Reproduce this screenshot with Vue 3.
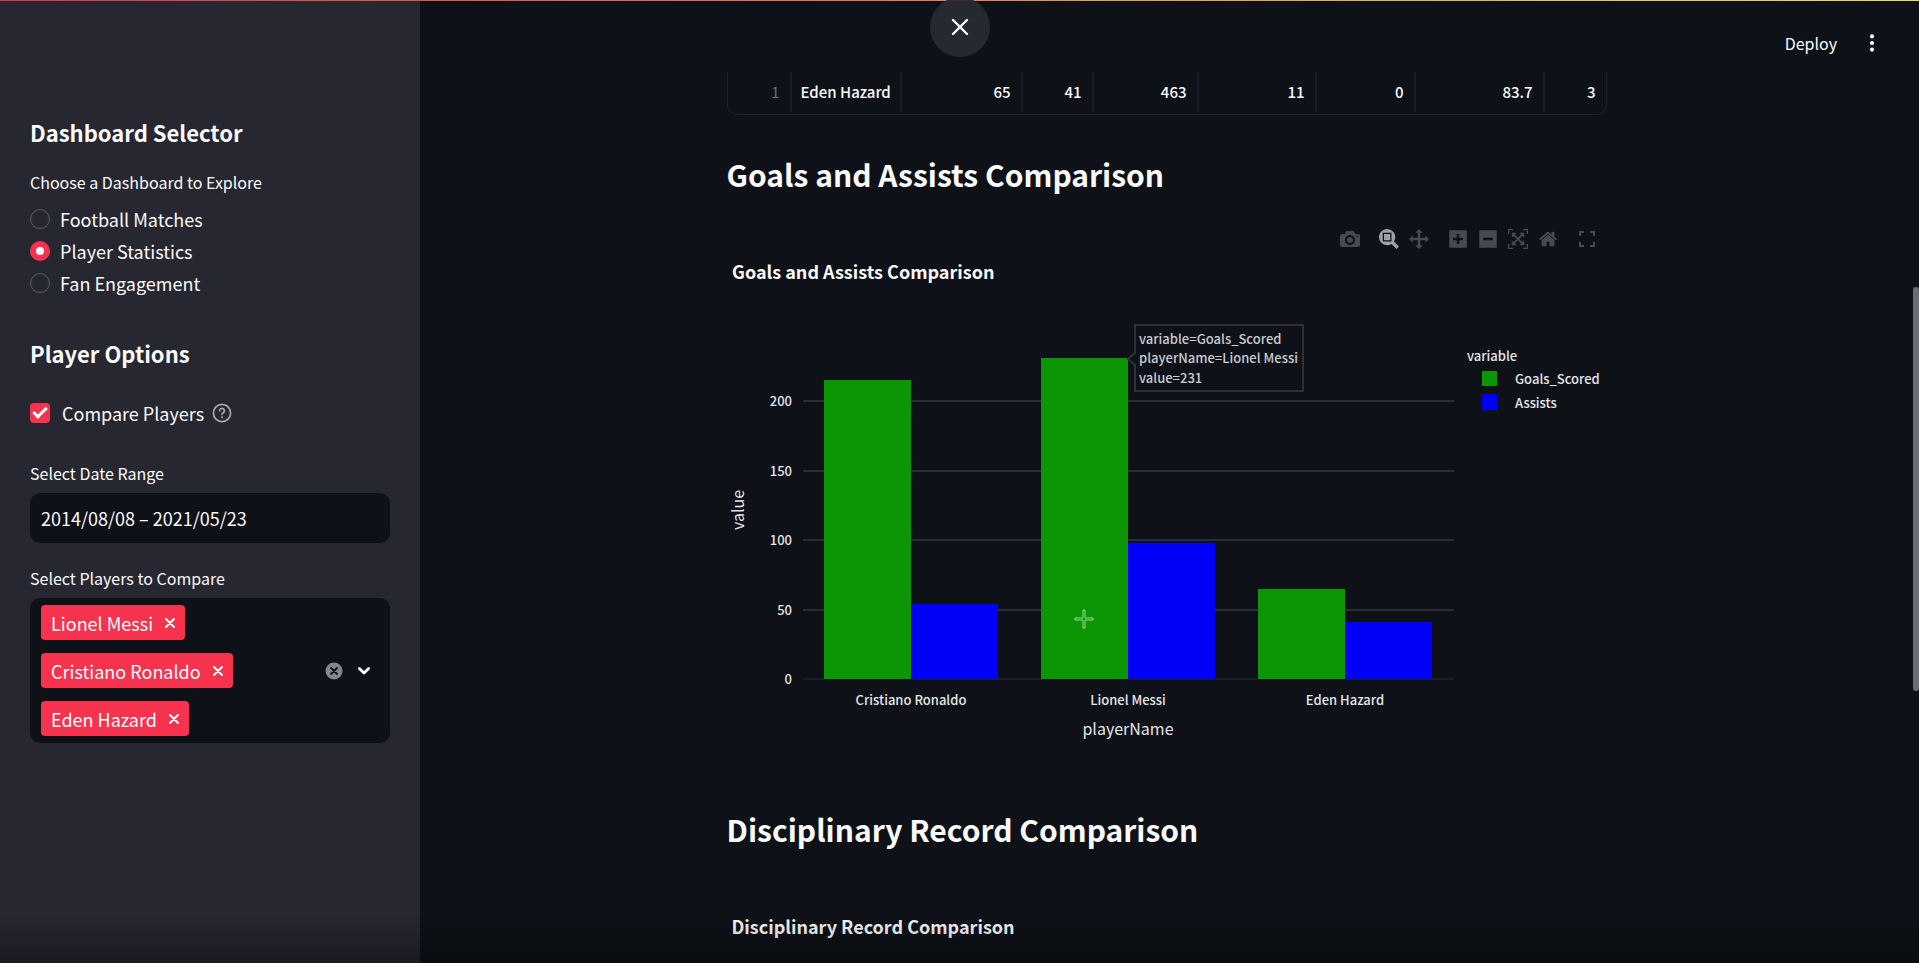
<script setup>
import { ref } from 'vue'

const dashboards = ['Football Matches', 'Player Statistics', 'Fan Engagement']
const dashboard = ref('Player Statistics')
const compare = ref(true)
const dateRange = ref('2014/08/08 – 2021/05/23')
const players = ref(['Lionel Messi', 'Cristiano Ronaldo', 'Eden Hazard'])
const row = ['65', '41', '463', '11', '0', '83.7', '3']

const removePlayer = (name) => {
  players.value = players.value.filter((p) => p !== name)
}

const stats = [
  { name: 'Cristiano Ronaldo', goals: 215, assists: 54 },
  { name: 'Lionel Messi', goals: 231, assists: 98 },
  { name: 'Eden Hazard', goals: 65, assists: 41 }
]
const plot = { left: 76, right: 727, zero: 429, step: 217, bar: 87 }
const yOf = (v) => Math.round(plot.zero - (v * 278) / 200)
const centre = (i) => plot.left + 108 + i * plot.step
const ticks = [0, 50, 100, 150, 200]

const tools = [
  { label: 'Download plot as a png', w: 1000, d: 'm500 450c-83 0-150-67-150-150 0-83 67-150 150-150 83 0 150 67 150 150 0 83-67 150-150 150z m400 150h-120c-16 0-34 13-39 29l-31 93c-6 15-23 28-40 28h-340c-16 0-34-13-39-28l-31-94c-6-15-23-28-40-28h-120c-55 0-100-45-100-100v-450c0-55 45-100 100-100h800c55 0 100 45 100 100v450c0 55-45 100-100 100z m-400-550c-138 0-250 112-250 250 0 138 112 250 250 250 138 0 250-112 250-250 0-138-112-250-250-250z m365 380c-19 0-35 16-35 35 0 19 16 35 35 35 19 0 35-16 35-35 0-19-16-35-35-35z' },
  { label: 'Zoom', w: 1000, start: true, active: true, d: 'm1000-25l-250 251c40 63 63 138 63 218 0 224-182 406-407 406-224 0-406-182-406-406s183-406 407-406c80 0 155 22 218 62l250-250 125 125z m-812 250l0 438 437 0 0-438-437 0z m62 375l313 0 0-312-313 0 0 312z' },
  { label: 'Pan', w: 1000, d: 'm1000 350l-187 188 0-125-250 0 0 250 125 0-188 187-187-187 125 0 0-250-250 0 0 125-188-188 186-187 0 125 252 0 0-250-125 0 187-188 188 188-125 0 0 250 250 0 0-126 187 188z' },
  { label: 'Zoom in', w: 875, start: true, d: 'm1 787l0-875 875 0 0 875-875 0z m687-500l-187 0 0-187-125 0 0 187-188 0 0 125 188 0 0 187 125 0 0-187 187 0 0-125z' },
  { label: 'Zoom out', w: 875, d: 'm0 788l0-876 875 0 0 876-875 0z m688-500l-500 0 0 125 500 0 0-125z' },
  { label: 'Autoscale', w: 1000, d: 'm250 850l-187 0-63 0 0-62 0-188 63 0 0 188 187 0 0 62z m688 0l-188 0 0-62 188 0 0-188 62 0 0 188 0 62-62 0z m-875-938l0 188-63 0 0-188 0-62 63 0 187 0 0 62-187 0z m875 188l0-188-188 0 0-62 188 0 62 0 0 62 0 188-62 0z m-125 188l-1 0-93-94-156 156 156 156 92-93 2 0 0 250-250 0 0-2 93-92-156-156-156 156 94 92 0 2-250 0 0-250 0 0 93 93 157-156-157-156-93 94 0 0 0-250 250 0 0 0-94 93 156 157 156-157-93-93 0 0 250 0 0 250z' },
  { label: 'Reset axes', w: 928, d: 'm786 296v-267q0-15-11-26t-25-10h-214v214h-143v-214h-214q-15 0-25 10t-11 26v267q0 1 0 2t0 2l321 264 321-264q1-1 1-4z m124 39l-34-41q-5-5-12-6h-2q-7 0-12 3l-386 322-386-322q-7-4-13-4-7 2-12 7l-35 41q-4 5-3 13t6 12l401 334q18 15 42 15t43-15l136-114v109q0 8 5 13t13 5h107q8 0 13-5t5-13v-227l122-102q5-5 6-12t-4-13z' }
]
</script>

<template>
  <div class="app">
    <div class="rainbow"></div>
    <button class="close" aria-label="Close">
      <svg width="18" height="18" viewBox="0 0 18 18"><path d="M2 2L16 16M16 2L2 16" stroke="#fff" stroke-width="2.4" stroke-linecap="round" /></svg>
    </button>

    <aside class="sidebar">
      <h2>Dashboard Selector</h2>
      <fieldset class="radios">
        <legend class="label">Choose a Dashboard to Explore</legend>
        <label v-for="d in dashboards" :key="d" class="radio">
          <input v-model="dashboard" type="radio" name="dashboard" :value="d" />{{ d }}
        </label>
      </fieldset>

      <h2 class="second">Player Options</h2>
      <div class="check-row">
        <label class="check">
          <input v-model="compare" type="checkbox" />Compare Players
        </label>
        <svg class="help" width="20" height="20" viewBox="0 0 20 20" fill="none" stroke="#a9aab1" stroke-width="1.7" stroke-linecap="round">
          <circle cx="10" cy="10" r="8.6" />
          <path d="M7.6 7.7a2.4 2.4 0 1 1 3.6 2.1c-.8.5-1.2.8-1.2 1.6" />
          <path d="M10 14.2v.1" stroke-width="2" />
        </svg>
      </div>

      <label class="label" for="dates">Select Date Range</label>
      <input id="dates" v-model="dateRange" class="date" type="text" />

      <span id="players-label" class="label players-label">Select Players to Compare</span>
      <div class="multi" role="group" aria-labelledby="players-label">
        <div class="tags">
          <span v-for="p in players" :key="p" class="tag">
            {{ p }}
            <button :aria-label="'Remove ' + p" @click="removePlayer(p)">
              <svg width="10" height="10" viewBox="0 0 10 10"><path d="M1 1L9 9M9 1L1 9" stroke="#fff" stroke-width="2" stroke-linecap="round" /></svg>
            </button>
          </span>
        </div>
        <div class="multi-actions">
          <button aria-label="Clear all" @click="players = []">
            <svg width="18" height="18" viewBox="0 0 18 18"><circle cx="9" cy="9" r="8.5" fill="#84868f" /><path d="M6 6L12 12M12 6L6 12" stroke="#0e1117" stroke-width="1.8" stroke-linecap="round" /></svg>
          </button>
          <button aria-label="Open">
            <svg width="14" height="10" viewBox="0 0 14 10"><path d="M2.4 2.4L7 7L11.6 2.4" fill="none" stroke="#fafafa" stroke-width="2.8" stroke-linecap="round" stroke-linejoin="round" /></svg>
          </button>
        </div>
      </div>
    </aside>

    <main class="main">
      <header class="topbar">
        <button class="deploy">Deploy</button>
        <button class="menu" aria-label="Main menu">
          <svg width="6" height="18" viewBox="0 0 6 18" fill="#fafafa"><circle cx="3" cy="2.4" r="2.1" /><circle cx="3" cy="9" r="2.1" /><circle cx="3" cy="15.6" r="2.1" /></svg>
        </button>
      </header>

      <div class="content">
        <div class="frame">
          <table>
            <colgroup>
              <col class="c-index" /><col class="c-name" /><col class="c-goals" /><col class="c-assists" /><col class="c-shots" /><col class="c-yellow" /><col class="c-red" /><col class="c-rate" /><col />
            </colgroup>
            <tbody>
              <tr>
                <th scope="row">1</th>
                <td class="name">Eden Hazard</td>
                <td v-for="(v, i) in row" :key="i">{{ v }}</td>
              </tr>
            </tbody>
          </table>
        </div>

        <h3>Goals and Assists Comparison</h3>

        <div class="modebar">
          <button v-for="t in tools" :key="t.label" :aria-label="t.label" :class="{ start: t.start, active: t.active }">
            <svg height="20" width="20" :viewBox="'0 0 ' + t.w + ' 1000'"><path :d="t.d" transform="matrix(1 0 0 -1 0 850)" /></svg>
          </button>
          <button class="start" aria-label="Fullscreen">
            <svg height="20" width="20" viewBox="0 0 20 20"><path d="M3 7V3H7M13 3H17V7M17 13V17H13M7 17H3V13" class="corners" /></svg>
          </button>
        </div>

        <svg class="chart" viewBox="0 0 880 500" role="img" aria-label="Goals and Assists Comparison">
          <text class="title" x="5" y="29">Goals and Assists Comparison</text>
          <g v-for="t in ticks" :key="t">
            <line :x1="plot.left" :x2="plot.right" :y1="yOf(t)" :y2="yOf(t)" :class="t ? 'grid' : 'grid zero'" />
            <text class="small" x="65" :y="yOf(t) + 5" text-anchor="end">{{ t }}</text>
          </g>
          <g v-for="(s, i) in stats" :key="s.name">
            <rect class="goals" :x="centre(i) - plot.bar" :y="yOf(s.goals)" :width="plot.bar" :height="plot.zero - yOf(s.goals)" />
            <rect class="assists" :x="centre(i)" :y="yOf(s.assists)" :width="plot.bar" :height="plot.zero - yOf(s.assists)" />
            <text class="small" :x="centre(i)" y="455" text-anchor="middle">{{ s.name }}</text>
          </g>
          <text class="axis" x="401" y="485" text-anchor="middle">playerName</text>
          <text class="axis" transform="translate(17 260) rotate(-90)" text-anchor="middle">value</text>

          <text class="small" x="740" y="111">variable</text>
          <rect class="goals" x="755" y="121" width="15" height="15" />
          <text class="small" x="788" y="134">Goals_Scored</text>
          <rect class="assists" x="755" y="144" width="15" height="16" />
          <text class="small" x="788" y="158">Assists</text>

          <path class="tip" d="M408 75H576V141H408V115L401 109L408 103Z" />
          <text class="tip-text" x="412" y="94">variable=Goals_Scored</text>
          <text class="tip-text" x="412" y="113">playerName=Lionel Messi</text>
          <text class="tip-text" x="412" y="133">value=231</text>

          <path class="cursor" d="M356 360h2v8h8v2h-8v8h-2v-8h-8v-2h8z" />
        </svg>

        <h3 class="record">Disciplinary Record Comparison</h3>
        <h4>Disciplinary Record Comparison</h4>
      </div>
    </main>

    <div class="scroll"><div class="thumb"></div></div>
    <div class="fade"></div>
  </div>
</template>

<style>
body {
  background: #0e1117;
  overflow: hidden;
}
</style>

<style scoped>
.app {
  position: relative;
  display: flex;
  height: 100vh;
  overflow: hidden;
  background: #0e1117;
  color: #fafafa;
  font-family: 'Noto Sans CJK SC', 'Open Sans', sans-serif;
  font-size: 18px;
  line-height: 24px;
}
button {
  display: flex;
  align-items: center;
  justify-content: center;
  padding: 0;
  border: 0;
  background: none;
  color: inherit;
  font: inherit;
  cursor: pointer;
}
h2, h3, h4 { margin: 0; }
.rainbow {
  position: absolute;
  inset: 0 0 auto 0;
  height: 1px;
  background: linear-gradient(90deg, #d83a4c, #e87a62 50%, #dc9a55 56%, #e2dc78);
  z-index: 2;
}
.close {
  position: absolute;
  top: -3px;
  left: 50%;
  width: 60px;
  height: 60px;
  margin-left: -30px;
  border-radius: 50%;
  background: rgba(40, 42, 49, 0.94);
  z-index: 3;
}
.sidebar {
  flex: none;
  box-sizing: border-box;
  width: 420px;
  padding: 116px 30px 0;
  background: #262730;
}
h2 {
  font-size: 22px;
  line-height: 32px;
  font-weight: 600;
}
.radios {
  margin: 22px 0 0;
  padding: 0;
  border: 0;
}
.label {
  display: block;
  padding: 0;
  font-size: 16px;
  line-height: 24px;
}
.radios .label { margin-bottom: 9px; }
.radio {
  display: flex;
  align-items: center;
  gap: 10px;
  height: 32px;
}
.radio input {
  appearance: none;
  box-sizing: border-box;
  width: 20px;
  height: 20px;
  margin: 0;
  border: 1px solid #5d5e67;
  border-radius: 50%;
}
.radio input:checked {
  border: 6px solid #f5334f;
  background: #fff;
}
.second { margin-top: 38px; }
.check-row {
  display: flex;
  align-items: center;
  gap: 8px;
  margin: 32px 0 36px;
}
.check {
  display: flex;
  align-items: center;
  gap: 12px;
}
.check input {
  appearance: none;
  display: grid;
  place-items: center;
  width: 20px;
  height: 20px;
  margin: 0;
  border-radius: 4px;
}
.check input:checked { background: #f5334f; }
.check input:checked::after {
  content: '';
  width: 11px;
  height: 5px;
  border: solid #fff;
  border-width: 0 0 3px 3px;
  transform: translateY(-2px) rotate(-45deg);
}
.date {
  box-sizing: border-box;
  width: 100%;
  height: 50px;
  margin-top: 8px;
  padding: 0 11px;
  border: 0;
  border-radius: 10px;
  background: #0e1117;
  color: #fafafa;
  font: inherit;
}
.players-label { margin: 23px 0 8px; }
.multi {
  display: flex;
  align-items: center;
  justify-content: space-between;
  padding: 7px 19px 7px 11px;
  border-radius: 10px;
  background: #0e1117;
}
.tags {
  display: flex;
  flex-direction: column;
  align-items: flex-start;
  gap: 13px;
}
.tag {
  display: flex;
  align-items: center;
  gap: 12px;
  height: 35px;
  padding: 0 10px;
  border-radius: 4px;
  background: #f5334f;
}
.multi-actions {
  display: flex;
  gap: 14px;
}
.main {
  flex: 1;
  min-width: 0;
}
.topbar {
  display: flex;
  box-sizing: border-box;
  align-items: center;
  justify-content: flex-end;
  gap: 32px;
  height: 72px;
  padding: 14px 38px 0 0;
  font-size: 16px;
}
.content {
  max-width: 880px;
  margin: 0 auto;
}
.frame {
  box-sizing: border-box;
  height: 43px;
  border: 1px solid #1f222a;
  border-top: 0;
  border-radius: 0 0 10px 10px;
}
table {
  width: 100%;
  table-layout: fixed;
  border-collapse: collapse;
  font-size: 15px;
  font-weight: 500;
}
.c-index { width: 63px; }
.c-name { width: 110px; }
.c-goals { width: 121px; }
.c-assists { width: 71px; }
.c-shots { width: 105px; }
.c-yellow { width: 118px; }
.c-red { width: 99px; }
.c-rate { width: 129px; }
th, td {
  height: 40px;
  padding: 0 10px;
  border-right: 2px solid #1b1e26;
  text-align: right;
  white-space: nowrap;
}
th {
  color: #6c6e76;
  font-weight: 400;
}
td:last-child { border-right: 0; }
.name { text-align: left; padding: 0 9px; }
h3 {
  margin-top: 35px;
  font-size: 30px;
  line-height: 48px;
  font-weight: 600;
}
.modebar {
  display: flex;
  justify-content: flex-end;
  gap: 10px;
  height: 22px;
  margin-top: 30px;
  padding-right: 10px;
}
.modebar button {
  width: 20px;
  height: 22px;
}
.modebar .start { margin-left: 9px; }
.modebar svg { fill: #484a4f; }
.modebar .active svg { fill: #a0a1a4; }
.modebar .corners {
  fill: none;
  stroke: #484a4f;
  stroke-width: 2;
}
.chart {
  display: block;
  width: 100%;
  height: auto;
  overflow: visible;
  fill: #e4e5e8;
}
.title {
  fill: #fafafa;
  font-size: 18px;
  font-weight: 700;
}
.small {
  font-size: 13px;
  font-weight: 500;
}
.axis { font-size: 16px; }
.grid {
  stroke: #2b2d34;
  stroke-width: 2;
}
.zero { stroke-width: 1; }
.goals { fill: #0c9605; }
.assists { fill: #0000fa; }
.tip {
  fill: #0e1117;
  stroke: #2e3138;
  stroke-width: 2;
}
.tip-text {
  fill: #c9cbd0;
  font-size: 13px;
  font-weight: 500;
}
.cursor {
  fill: #0c9605;
  stroke: #8fe08a;
  stroke-width: 1;
}
.record { margin-top: 55px; }
h4 {
  margin: 61px 0 0 5px;
  font-size: 18px;
  line-height: 24px;
}
.scroll {
  flex: none;
  width: 6px;
  padding-top: 287px;
}
.thumb {
  height: 404px;
  border-radius: 3px;
  background: #6b6d73;
}
.fade {
  position: absolute;
  inset: auto 0 0 0;
  height: 50px;
  background: linear-gradient(transparent, rgba(0, 0, 0, 0.3));
  pointer-events: none;
}
</style>
